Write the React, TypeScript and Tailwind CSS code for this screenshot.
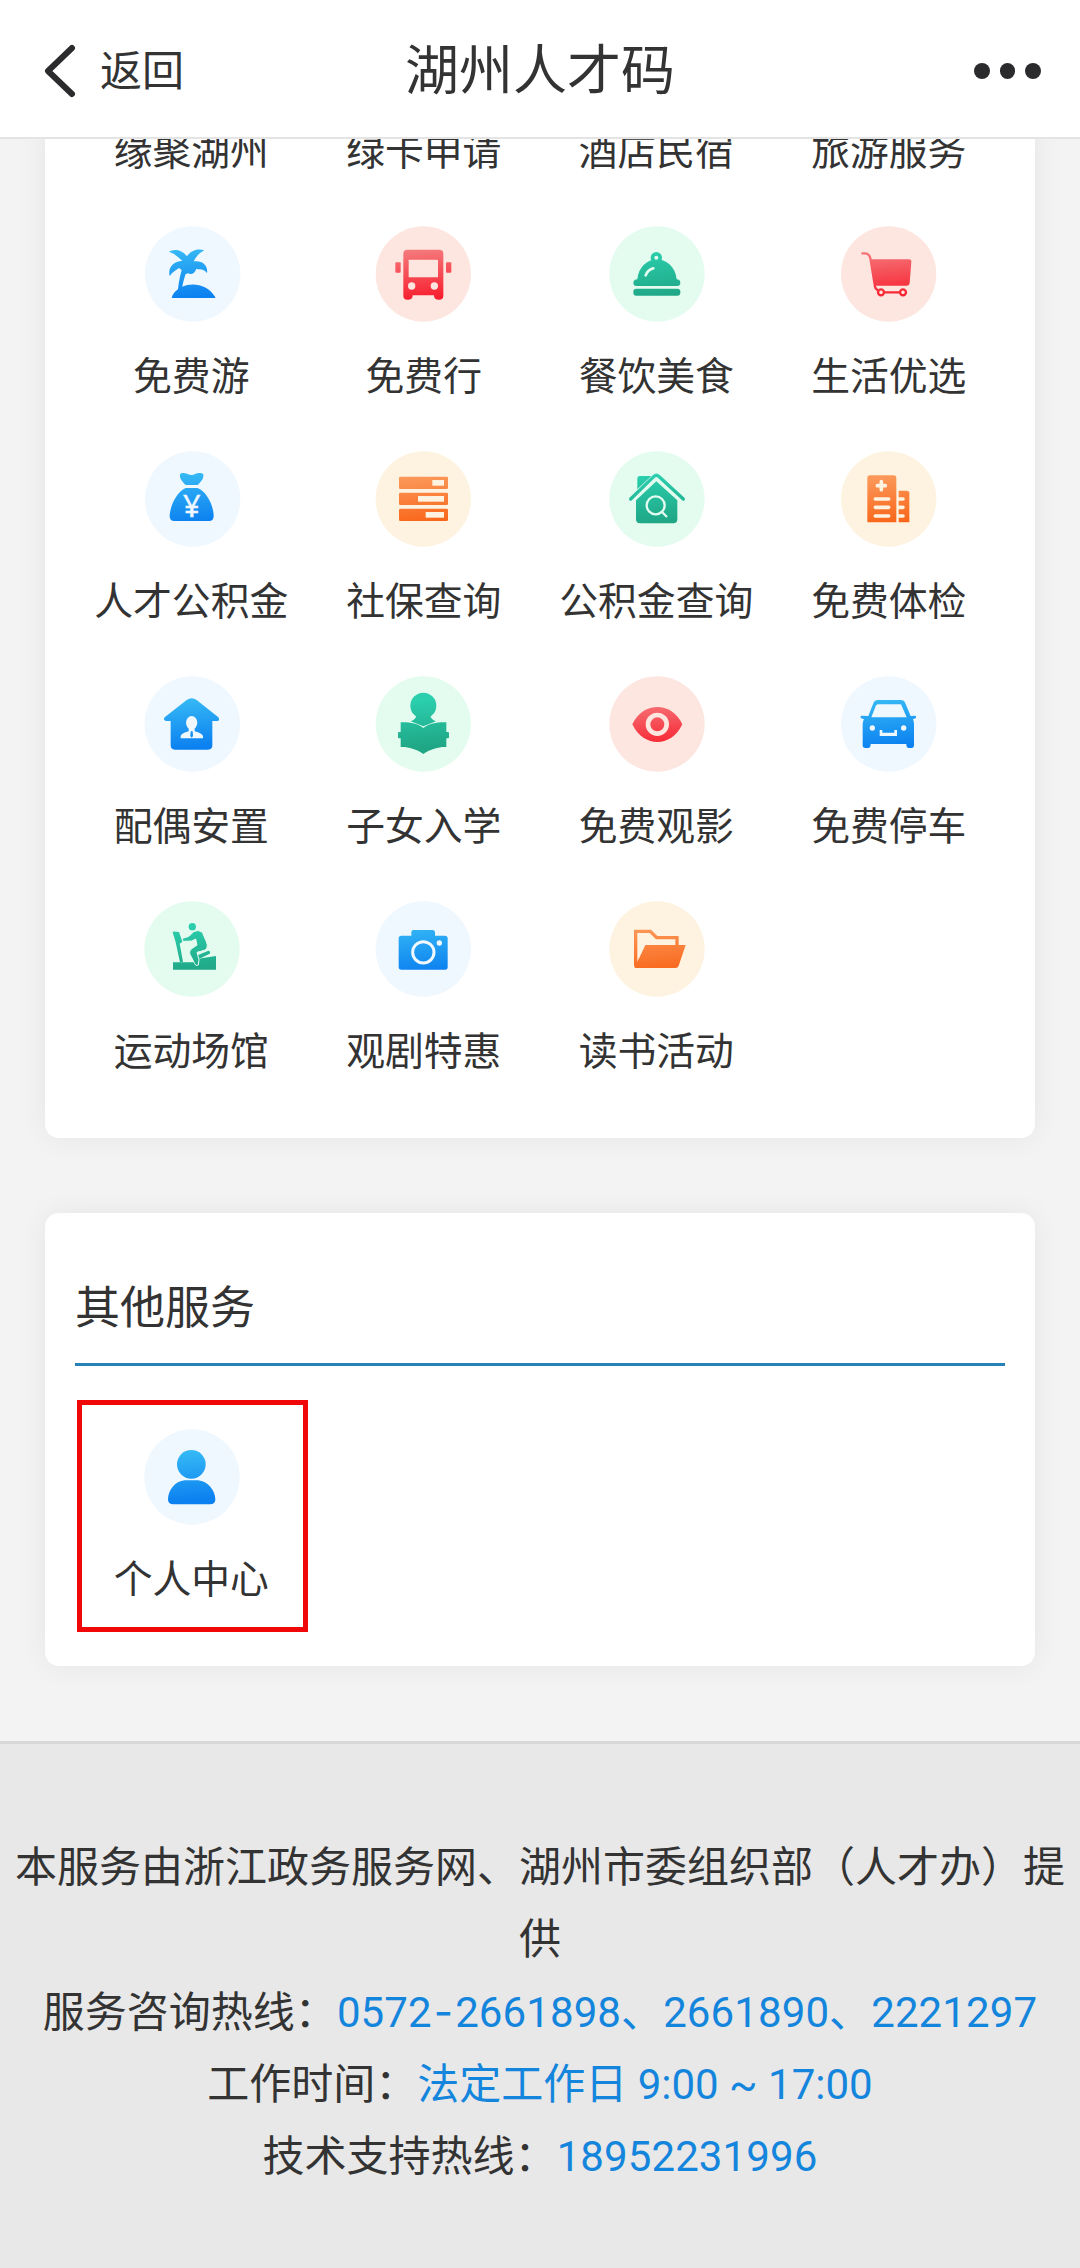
import type { ReactNode } from "react";

type Tone = "blue" | "red" | "green" | "orange";

const tones = {
  blue: { from: "#35b8f5", to: "#0b80f0", bg: "#eff7ff" },
  red: { from: "#f47a7c", to: "#f8202f", bg: "#fde6df" },
  green: { from: "#2bcfae", to: "#1fa685", bg: "#e4fcf0" },
  orange: { from: "#fb9a5c", to: "#f9661a", bg: "#fef3e0" },
};

type IconProps = { id: string; tone: Tone; cx?: number; children: ReactNode };

function Icon({ id, tone, cx = 144, children }: IconProps) {
  const { from, to, bg } = tones[tone];
  return (
    <svg
      viewBox="0 0 288 288"
      className="w-24 h-24 overflow-visible"
      style={{ color: bg }}
    >
      <defs>
        <linearGradient
          id={id}
          gradientUnits="userSpaceOnUse"
          x1="130"
          y1="70"
          x2="144"
          y2="216"
        >
          <stop offset="0" stopColor={from} />
          <stop offset="1" stopColor={to} />
        </linearGradient>
      </defs>
      <circle cx={cx} cy="144" r="143" fill={bg} />
      <g fill={`url(#${id})`}>{children}</g>
    </svg>
  );
}

function PalmIcon() {
  return (
    <Icon id="palm" tone="blue" cx={149}>
      <path d="M78 78C92 68 116 70 132 91C144 72 165 66 184 73C170 80 160 90 152 106C178 102 196 118 192 141C184 131 176 128 164 130L160 128C156 142 144 148 136 142L128 144C124 156 120 170 118 182C150 168 195 176 217 214C217 216 216 216 214 216H86C88 206 96 196 105 190C107 170 111 150 116 132L108 126C100 132 88 138 80 150C74 126 90 106 118 104C108 98 94 80 78 78Z" />
    </Icon>
  );
}

function BusIcon() {
  return (
    <Icon id="bus" tone="red" cx={142}>
      <path d="M94 71H190Q202 71 202 83V209Q202 221 190 221H186Q174 221 174 208H110Q110 221 98 221H94Q82 221 82 209V83Q82 71 94 71Z" />
      <rect x="58" y="109" width="16" height="31" rx="3" />
      <rect x="210" y="109" width="16" height="31" rx="3" />
      <g fill="currentColor">
        <rect x="98" y="101" width="88" height="53" rx="2" />
        <circle cx="107" cy="180" r="11" />
        <circle cx="175" cy="180" r="11" />
      </g>
    </Icon>
  );
}

function DishIcon() {
  return (
    <Icon id="dish" tone="green" cx={147}>
      <circle cx="145" cy="95" r="17" />
      <path d="M88 160C91 124 118 100 146 100C176 100 203 124 206 160Q217 161 217 171Q217 180 207 180H86Q76 180 76 171Q76 161 88 160Z" />
      <rect x="76" y="188" width="141" height="21" rx="9" />
      <circle cx="145" cy="95" r="6" fill="currentColor" />
      <path
        d="M113 148Q118 133 136 127"
        fill="none"
        stroke="currentColor"
        strokeWidth="8"
        strokeLinecap="round"
      />
    </Icon>
  );
}

function CartIcon() {
  return (
    <Icon id="cart" tone="red" cx={143}>
      <path d="M88 100H204Q212 100 211 108L206 172Q205 179 198 179H107Q101 179 100 173Z" />
      <g fill="none" stroke="url(#cart)" strokeWidth="7" strokeLinecap="round">
        <path d="M64 82H72Q84 83 88 96L101 175Q101 188 112 194M130 199H176" />
        <circle cx="120" cy="199" r="9" />
        <circle cx="186" cy="199" r="9" />
      </g>
    </Icon>
  );
}

function MoneyBagIcon() {
  return (
    <Icon id="bag" tone="blue" cx={149}>
      <path d="M111 70C116 64 126 66 134 69C142 73 150 73 156 69C164 65 176 65 181 70C183 82 174 92 168 98Q166 102 161 102H131Q127 102 124 98C118 92 109 82 111 70Z" />
      <path d="M128 111H164C192 122 211 165 212 192Q213 210 198 210H94Q79 210 80 192C82 165 101 122 128 111Z" />
      <text
        x="146"
        y="197"
        textAnchor="middle"
        fill="currentColor"
        stroke="currentColor"
        strokeWidth="1.5"
        fontSize="92"
        fontFamily="Noto Sans"
      >
        ¥
      </text>
    </Icon>
  );
}

function RecordsIcon() {
  return (
    <Icon id="records" tone="orange" cx={142}>
      <rect x="69" y="77" width="147" height="37" rx="4" />
      <rect x="69" y="125" width="147" height="37" rx="4" />
      <rect x="69" y="173" width="147" height="37" rx="4" />
      <g fill="currentColor">
        <rect x="169" y="87" width="35" height="17" />
        <rect x="126" y="135" width="78" height="17" />
        <rect x="149" y="183" width="55" height="17" />
      </g>
    </Icon>
  );
}

function HouseSearchIcon() {
  return (
    <Icon id="houseSearch" tone="green" cx={147}>
      <path d="M88 83Q88 75 96 75H130L88 115Z" />
      <path d="M145 91L208 148V205Q208 217 196 217H96Q84 217 84 205V148Z" />
      <path
        d="M68 144L138 76Q145 69 152 76L226 144"
        fill="none"
        stroke="url(#houseSearch)"
        strokeWidth="10"
        strokeLinecap="round"
      />
      <g fill="none" stroke="currentColor" strokeWidth="7">
        <circle cx="143" cy="163" r="27" />
        <path d="M162 183L177 198" />
      </g>
    </Icon>
  );
}

function HospitalIcon() {
  return (
    <Icon id="hospital" tone="orange" cx={143}>
      <path d="M87 73H158Q166 73 166 81V214H79V81Q79 73 87 73Z" />
      <path d="M173 119H197Q205 119 205 127V214H173Z" />
      <g
        fill="none"
        stroke="currentColor"
        strokeWidth="11"
        strokeLinecap="round"
      >
        <path d="M121 92V116M109 104H133" />
        <path d="M103 144H143M103 169H143M103 195H143" />
        <path d="M174 144H186M174 169H186M174 195H186" />
      </g>
    </Icon>
  );
}

function HousePersonIcon() {
  return (
    <Icon id="housePerson" tone="blue" cx={148}>
      <path d="M131 72Q146 62 161 72L226 124Q232 135 222 135H208V208Q208 221 195 221H96Q83 221 83 208V135H70Q59 133 65 124Z" />
      <g fill="currentColor">
        <ellipse cx="146" cy="140" rx="17" ry="20" />
        <path d="M113 187V180Q114 172 137 166V152H155V166Q178 172 180 180V187Z" />
      </g>
      <path d="M143 166H149L150 180L146 185L142 180Z" />
    </Icon>
  );
}

function ReaderIcon() {
  return (
    <Icon id="reader" tone="green" cx={142}>
      <circle cx="142" cy="89" r="39" />
      <path d="M121 118H163Q164 130 180 136L142 151L104 136Q120 130 121 118Z" />
      <rect x="66" y="168" width="153" height="19" rx="3" />
      <path d="M74 139C100 138 125 142 142 156C160 142 185 138 211 139V213C190 212 165 218 142 234C120 218 95 212 74 213Z" />
    </Icon>
  );
}

function EyeIcon() {
  return (
    <Icon id="eye" tone="red" cx={147}>
      <path d="M73 145C90 108 120 93 148 93C176 93 206 108 223 145C206 182 176 198 148 198C120 198 90 182 73 145Z" />
      <circle
        cx="148"
        cy="145"
        r="28"
        fill="none"
        stroke="currentColor"
        strokeWidth="14"
      />
    </Icon>
  );
}

function CarIcon() {
  return (
    <Icon id="car" tone="blue" cx={143}>
      <path d="M97 82Q101 72 111 72H179Q189 72 193 82L209 120L222 119Q227 120 225 126L216 130Q219 136 219 144V208Q219 216 211 216H204Q196 216 196 204H89Q89 216 81 216H73Q65 216 65 208V144Q65 136 69 130L59 126Q57 120 62 119L82 120Z" />
      <g fill="currentColor">
        <path d="M110 85H180L197 124H91L105 88Z" />
        <circle cx="94" cy="156" r="8" />
        <circle cx="188" cy="156" r="8" />
        <path d="M116 162H124V170H160V162H168V180H116Z" />
      </g>
    </Icon>
  );
}

function TreadmillIcon() {
  return (
    <Icon id="treadmill" tone="green" cx={147}>
      <path d="M90 184H150L175 172L219 165V206H90Z" />
      <path d="M89 94Q90 91 98 92L108 93L118 122L110 128L120 182L111 184L98 124Z" />
      <path d="M160 164L196 149Q204 151 200 158L168 174Z" />
      <path
        d="M119 112L138 106L152 92Q166 84 178 94L190 122Q198 142 184 148L162 154L168 176L166 192Q158 197 155 188L140 158Q138 147 148 142L162 132L158 114L146 120L122 121Q116 118 119 112Z"
        stroke="currentColor"
        strokeWidth="3"
      />
      <circle cx="148" cy="77" r="11" />
    </Icon>
  );
}

function CameraIcon() {
  return (
    <Icon id="camera" tone="blue" cx={142}>
      <path d="M112 87H170Q176 87 177 93V104H207Q215 104 215 112V198Q215 206 207 206H76Q68 206 68 198V112Q68 104 76 104H106V93Q107 87 112 87Z" />
      <circle
        cx="142"
        cy="154"
        r="32"
        fill="none"
        stroke="currentColor"
        strokeWidth="9"
      />
      <circle cx="190" cy="126" r="8" fill="currentColor" />
    </Icon>
  );
}

function FolderIcon() {
  return (
    <Icon id="folder" tone="orange" cx={147}>
      <path
        d="M83 196V91H127L146 110H207V134"
        fill="none"
        stroke="url(#folder)"
        strokeWidth="10"
      />
      <path d="M112 132H233L212 194Q210 201 202 201H84Q78 201 80 194L94 170Z" />
    </Icon>
  );
}

function UserIcon() {
  return (
    <Icon id="user" tone="blue" cx={147}>
      <circle cx="145" cy="106" r="43" />
      <path d="M125 154H165C195 156 216 185 217 210Q218 226 200 226H92Q74 226 75 210C76 185 95 156 125 154Z" />
    </Icon>
  );
}

const clippedLabels = ["缘聚湖州", "绿卡申请", "酒店民宿", "旅游服务"];

const services = [
  { label: "免费游", icon: <PalmIcon /> },
  { label: "免费行", icon: <BusIcon /> },
  { label: "餐饮美食", icon: <DishIcon /> },
  { label: "生活优选", icon: <CartIcon /> },
  { label: "人才公积金", icon: <MoneyBagIcon /> },
  { label: "社保查询", icon: <RecordsIcon /> },
  { label: "公积金查询", icon: <HouseSearchIcon /> },
  { label: "免费体检", icon: <HospitalIcon /> },
  { label: "配偶安置", icon: <HousePersonIcon /> },
  { label: "子女入学", icon: <ReaderIcon /> },
  { label: "免费观影", icon: <EyeIcon /> },
  { label: "免费停车", icon: <CarIcon /> },
  { label: "运动场馆", icon: <TreadmillIcon /> },
  { label: "观剧特惠", icon: <CameraIcon /> },
  { label: "读书活动", icon: <FolderIcon /> },
];

function Tile({ label, icon }: { label: string; icon?: ReactNode }) {
  return (
    <div className="flex flex-col items-center gap-[27px] pb-[46px]">
      {icon}
      <div className="text-[38.8px] leading-[56px] whitespace-nowrap">
        {label}
      </div>
    </div>
  );
}

export default function App() {
  return (
    <div className="w-[1080px] h-[2268px] flex flex-col overflow-hidden bg-[#f3f3f3] text-[#333] font-['Roboto','Noto_Sans_CJK_SC',sans-serif]">
      <header className="relative z-10 grid grid-cols-3 items-center shrink-0 h-[139px] px-[41px] pt-[5px] bg-white border-b-2 border-[#e4e4e4]">
        <div className="flex items-center gap-[24px] pl-[2px]">
          <svg
            viewBox="0 0 33 54"
            className="w-[33px] h-[54px]"
            fill="none"
            stroke="#2b2b2d"
            strokeWidth="6"
            strokeLinecap="round"
            strokeLinejoin="round"
          >
            <path d="M29 4L5 27L29 50" />
          </svg>
          <div className="text-[42px]">返回</div>
        </div>
        <div className="text-[54px] text-center whitespace-nowrap">
          湖州人才码
        </div>
        <div className="flex justify-end gap-[10px] -mr-[2px]">
          <div className="w-[15.5px] h-[15.5px] rounded-full bg-[#2b2b2d]" />
          <div className="w-[15.5px] h-[15.5px] rounded-full bg-[#2b2b2d]" />
          <div className="w-[15.5px] h-[15.5px] rounded-full bg-[#2b2b2d]" />
        </div>
      </header>

      <main className="flex flex-col gap-[75px] px-[45px] pb-[75px] -mt-[15px]">
        <section className="grid grid-cols-4 px-[30px] pb-3 bg-white rounded-b-[14px] shadow-[0_0_30px_rgba(0,0,0,0.06)]">
          {clippedLabels.map((label) => (
            <Tile key={label} label={label} />
          ))}
          {services.map((item) => (
            <Tile key={item.label} label={item.label} icon={item.icon} />
          ))}
        </section>

        <section className="h-[453px] px-[30px] pt-[58px] bg-white rounded-[14px] shadow-[0_0_30px_rgba(0,0,0,0.06)]">
          <h2 className="text-[45px] leading-[76px] pb-4 border-b-3 border-[#2682b6]">
            其他服务
          </h2>
          <div className="relative grid grid-cols-4 pt-[63px]">
            <Tile label="个人中心" icon={<UserIcon />} />
            <div className="absolute left-[2px] top-[34px] w-[231px] h-[232px] border-5 border-[#f00808]" />
          </div>
        </section>
      </main>

      <footer className="flex-auto pt-[88px] px-[10px] bg-[#e8e8e8] border-t-3 border-[#d8d8d8] text-[42px] leading-[72px] text-center">
        <p>本服务由浙江政务服务网、湖州市委组织部（人才办）提供</p>
        <p className="whitespace-nowrap">
          服务咨询热线：
          <span className="text-[#1485dc] tracking-[0.1px]">
            0572<span className="font-['Inter'] px-[2px]">-</span>
            2661898、2661890、2221297
          </span>
        </p>
        <p>
          工作时间：
          <span className="text-[#1485dc]">法定工作日 9:00 ~ 17:00</span>
        </p>
        <p>
          技术支持热线：
          <span className="text-[#1485dc] tracking-[0.1px]">18952231996</span>
        </p>
      </footer>
    </div>
  );
}
